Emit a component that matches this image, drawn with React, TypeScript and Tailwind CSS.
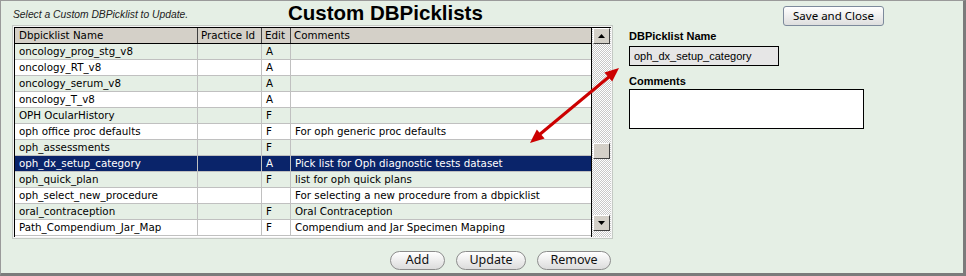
import React from 'react';

type Row = { name: string; practice: string; edit: string; comments: string };

const rows: Row[] = [
  { name: 'oncology_prog_stg_v8', practice: '', edit: 'A', comments: '' },
  { name: 'oncology_RT_v8', practice: '', edit: 'A', comments: '' },
  { name: 'oncology_serum_v8', practice: '', edit: 'A', comments: '' },
  { name: 'oncology_T_v8', practice: '', edit: 'A', comments: '' },
  { name: 'OPH OcularHistory', practice: '', edit: 'F', comments: '' },
  { name: 'oph office proc defaults', practice: '', edit: 'F', comments: 'For oph generic proc defaults' },
  { name: 'oph_assessments', practice: '', edit: 'F', comments: '' },
  { name: 'oph_dx_setup_category', practice: '', edit: 'A', comments: 'Pick list for Oph diagnostic tests dataset' },
  { name: 'oph_quick_plan', practice: '', edit: 'F', comments: 'list for oph quick plans' },
  { name: 'oph_select_new_procedure', practice: '', edit: '', comments: 'For selecting a new procedure from a dbpicklist' },
  { name: 'oral_contraception', practice: '', edit: 'F', comments: 'Oral Contraception' },
  { name: 'Path_Compendium_Jar_Map', practice: '', edit: 'F', comments: 'Compendium and Jar Specimen Mapping' },
];

const SELECTED = 7;

function ScrollButton({ up }: { up?: boolean }) {
  return (
    <div className="w-[17px] h-[16px] mx-auto bg-[#d4d0c8] border border-t-white border-l-white border-r-[#404040] border-b-[#404040] flex items-center justify-center">
      <svg width="7" height="4" viewBox="0 0 7 4">
        {up ? <polygon points="0,4 7,4 3.5,0" fill="#000" /> : <polygon points="0,0 7,0 3.5,4" fill="#000" />}
      </svg>
    </div>
  );
}

function PillButton({ label, w }: { label: string; w: string }) {
  return (
    <button
      className={`${w} h-[19px] rounded-[10px] border border-[#8c8c8c] bg-gradient-to-b from-white to-[#dcdcdc] text-[12.5px] leading-none text-[#111] flex items-center justify-center`}
      style={{ fontFamily: '"Noto Sans", sans-serif' }}
    >
      {label}
    </button>
  );
}

export default function App() {
  const cell = 'h-full flex items-center pl-[4px] border-r border-[#c0c0c0] whitespace-nowrap overflow-hidden';
  return (
    <div
      className="relative w-[966px] h-[276px] bg-[#e5efe5] border-t border-l border-[#9a9a9a] border-r-[3px] border-b-[3px] border-r-[#7b7b7b] border-b-[#7b7b7b] flex pl-[11px]"
      style={{ fontFamily: '"DejaVu Sans", sans-serif' }}
    >
      {/* Left: list */}
      <div className="w-[601px] flex flex-col">
        <div className="h-[24px] flex items-end">
          <div
            className="w-[276px] text-[10.3px] italic text-[#222] pb-[3px] pl-[1px]"
            style={{ fontFamily: '"Liberation Sans", Arial, sans-serif' }}
          >
            Select a Custom DBPicklist to Update.
          </div>
          <div className="text-[20.5px] leading-[24px] font-bold text-black" style={{ fontFamily: '"Liberation Sans", Arial, sans-serif' }}>
            Custom DBPicklists
          </div>
        </div>

        <div className="h-[214px] border border-[#c4cac4] p-px bg-[#f4f4f4]">
          <div className="h-full flex border-l border-t border-black text-[10.3px] text-black">
            <div className="w-[578px] border-r border-black flex flex-col bg-white">
              <div className="h-[16px] shrink-0 flex bg-[#d4d0c8] border-b border-black">
                <div className="w-[183px] h-full flex items-center pl-[4px] border-r border-[#404040]">Dbpicklist Name</div>
                <div className="w-[64px] h-full flex items-center pl-[3px] border-r border-[#404040]">Practice Id</div>
                <div className="w-[29px] h-full flex items-center pl-[3px] border-r border-[#404040]">Edit</div>
                <div className="flex-1 h-full flex items-center pl-[3px]">Comments</div>
              </div>
              {rows.map((r, i) => {
                const sel = i === SELECTED;
                const bg = sel ? 'bg-[#0a246a] text-white' : i % 2 === 0 ? 'bg-[#e5efe5]' : 'bg-white';
                return (
                  <div key={r.name} className={`h-[16px] shrink-0 flex border-b border-[#c0c0c0] ${bg}`}>
                    <div className={`w-[183px] ${cell}`}>{r.name}</div>
                    <div className={`w-[64px] ${cell}`}>{r.practice}</div>
                    <div className={`w-[29px] ${cell}`}>{r.edit}</div>
                    <div className="flex-1 h-full flex items-center pl-[4px] whitespace-nowrap overflow-hidden">{r.comments}</div>
                  </div>
                );
              })}
            </div>
            {/* scrollbar */}
            <div className="w-[19px] flex flex-col bg-[repeating-conic-gradient(#c8c8c8_0%_25%,#ffffff_0%_50%)] bg-[length:2px_2px]">
              <ScrollButton up />
              <div className="h-[99px]" />
              <div className="w-[17px] h-[16px] mx-auto bg-[#d4d0c8] border border-t-white border-l-white border-r-[#404040] border-b-[#404040]" />
              <div className="flex-1" />
              <div className="mb-[6px]">
                <ScrollButton />
              </div>
            </div>
          </div>
        </div>

        <div className="flex justify-end gap-[11px] pr-[2px] mt-[12px]">
          <PillButton label="Add" w="w-[55px]" />
          <PillButton label="Update" w="w-[70px]" />
          <PillButton label="Remove" w="w-[74px]" />
        </div>
      </div>

      {/* Right: editor */}
      <div className="flex flex-col pl-[16px]" style={{ fontFamily: '"Liberation Sans", Arial, sans-serif' }}>
        <button
          className="ml-[154px] mt-[5px] w-[101px] h-[20px] rounded-[3px] border border-[#7d8a9c] bg-gradient-to-b from-white to-[#dedede] text-[11.5px] leading-none text-black"
          style={{ fontFamily: '"Noto Sans", sans-serif' }}
        >
          Save and Close
        </button>
        <div className="mt-[4px] text-[11px] leading-[13px] font-bold text-black">DBPicklist Name</div>
        <div className="mt-[3px] w-[150px] h-[20px] bg-[#e6e6e6] border border-black flex items-center pl-[4px] text-[11px] text-black">
          oph_dx_setup_category
        </div>
        <div className="mt-[9px] text-[11px] leading-[13px] font-bold text-black">Comments</div>
        <div className="mt-[1px] w-[235px] h-[40px] bg-white border border-black" />
      </div>

      {/* red annotation arrow */}
      <svg className="absolute left-0 top-0 pointer-events-none" width="966" height="276" viewBox="0 0 966 276">
        <line x1="538" y1="134" x2="609" y2="75" stroke="#cc0000" strokeWidth="3" />
        <polygon points="618,67 611.2,80.6 603.4,71.4" fill="#cc0000" />
        <polygon points="529,142 543.6,137.6 535.8,128.4" fill="#cc0000" />
      </svg>
    </div>
  );
}
